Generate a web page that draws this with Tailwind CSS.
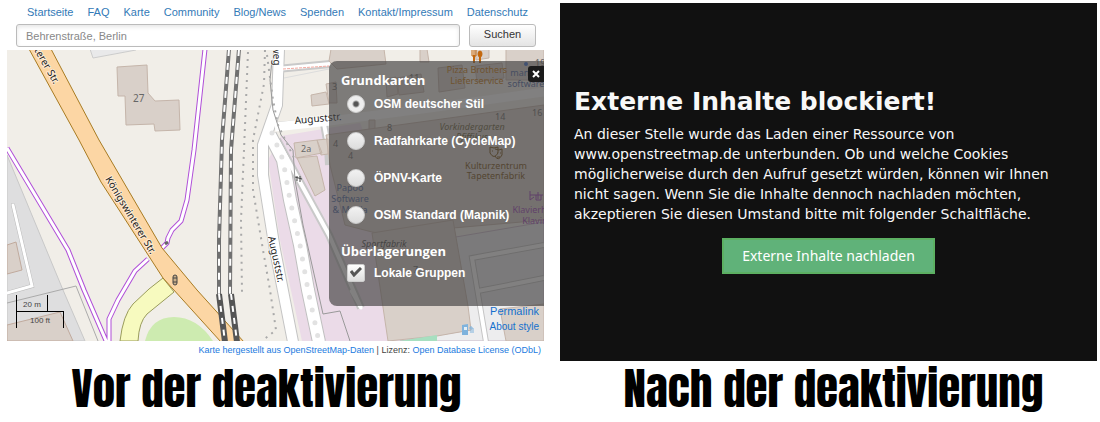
<!DOCTYPE html>
<html lang="de">
<head>
<meta charset="utf-8">
<title>Externe Inhalte: Vorher und Nachher</title>
<script src="https://cdn.jsdelivr.net/npm/@tailwindcss/browser@4"></script>
</head>
<body class="bg-white font-['Liberation_Sans',Arial,sans-serif]">
<main class="grid grid-cols-2 gap-4 pr-[3px] pl-[7px]">

<!-- Vorher: Karte -->
<figure class="flex flex-col">
  <nav class="flex h-6 items-center gap-[14px] pl-5 text-[11px] whitespace-nowrap text-[#337ab7]">
    <a href="#">Startseite</a><a href="#">FAQ</a><a href="#">Karte</a><a href="#">Community</a><a href="#">Blog/News</a><a href="#">Spenden</a><a href="#">Kontakt/Impressum</a><a href="#">Datenschutz</a>
  </nav>
  <form class="flex gap-[9px] pr-2 pb-[3px] pl-[9px]">
    <input type="text" aria-label="Adresse suchen" placeholder="Behrenstraße, Berlin" class="h-[23px] min-w-0 grow rounded-[3px] border border-[#bbb] px-[9px] text-[11px] shadow-inner shadow-black/10 placeholder:text-[#888]">
    <button type="button" class="h-[23px] w-[67px] rounded-[3px] border border-[#bbb] bg-linear-to-b from-white to-[#e4e4e4] pb-[3px] text-[11px] text-[#333]">Suchen</button>
  </form>
  <div class="relative">
    <svg viewBox="7 50 537 291" class="block w-full" font-family="Noto Sans, sans-serif" font-size="9" fill="none" role="img" aria-label="Karte">
      <rect x="7" y="50" width="537" height="291" fill="#f1eee8"/>
      <!-- Flächen -->
      <path d="M7 155L63 290L85 341H7Z" fill="#dededf" stroke="#c8c8c8"/>
      <path d="M7 245L16 242L22 270L7 274ZM7 325L60 312L73 341H7Z" fill="#d9d0c9" stroke="#c0aa9d"/>
      <path d="M13 205L32 286L7 293" stroke="#bbb" stroke-width="4" stroke-linecap="round"/>
      <path d="M13 205L32 286L7 293" stroke="#fff" stroke-width="3" stroke-linecap="round"/>
      <path d="M7 303L76 286L98 341" stroke="#aaa"/>
      <path d="M90 49L93 58L136 50V49Z" fill="#e9e9ea" stroke="#ccc"/>
      <path d="M117 67L147 65L148 93L155 101L179 100L180 130L155 131L154 124L126 125L125 96L118 96Z" fill="#d9d0c9" stroke="#c5b5aa"/>
      <path d="M145 341Q151 317 174 317Q197 317 213 341Z" fill="#cdebb0"/>
      <path d="M268 160L281 136L335 127L360 123L400 225L476 240L485 341H302L280 240Z" fill="#ebdbe8"/>
      <path d="M284 78L329 69M272 70L284 69" stroke="#ddd"/>
      <!-- Wege -->
      <g stroke-linejoin="round">
        <path d="M7 148L68 250L84 290L107 343M205 49L194 150L187 200L181 221L172 230L168 238L167 243L162 248M148 259L135 271L118 300L109 319V341" stroke="#b04ed8" stroke-width="5"/>
        <path d="M7 148L68 250L84 290L107 343M205 49L194 150L187 200L181 221L172 230L168 238L167 243L162 248M148 259L135 271L118 300L109 319V341" stroke="#fff" stroke-width="3"/>
        <path d="M165 244L168 242" stroke="#666" stroke-width="3"/>
      </g>
      <path d="M163 278L149 289L133 304Q123 315 120 341H138Q139 322 147 314L174 292Z" fill="#f7fabf" stroke="#9a9c5c"/>
      <path d="M29 49L79 140L101 182L163 278L221 342H244L197 290L162 248L99 140L51 49Z" fill="#fcd6a4" stroke="#a87b22"/>
      <!-- Gleise -->
      <path d="M229 49L222 140L219 240V294M239 49L231 150L230 294" stroke="#707070" stroke-width="4"/>
      <path d="M229 49L222 140L219 240V294M239 49L231 150L230 294" stroke="#fff" stroke-width="2" stroke-dasharray="7 7"/>
      <path d="M219 294L225 342M231 294L237 342" stroke="#555" stroke-width="6"/>
      <path d="M219 294L225 342M231 294L237 342" stroke="#fff" stroke-width="2" stroke-dasharray="6 6"/>
      <path d="M248 52L244 150L241 220L242 293M265 50L264 84L253 140L253 190L263 250L270 290L276 330L262 341" stroke="#a9a9a9" stroke-width="2" stroke-dasharray="2 5"/>
      <!-- Straßen -->
      <path d="M279 49L277 105L263 145V175L275 250L293 342" stroke="#c4c4c4" stroke-width="12"/>
      <path d="M277 126L330 121L430 108L544 92M277 69L330 64M324 124L328 146L329 165M277 140L329 235L361 308" stroke="#c9c9c9" stroke-width="8"/>
      <path d="M270 135L283 160L290 200L300 245L308 290L319 342" stroke="#c0c0c0" stroke-width="14"/>
      <path d="M279 49L277 105L263 145V175L275 250L293 342" stroke="#fff" stroke-width="10"/>
      <path d="M275 127L330 121L430 108L544 92" stroke="#fff" stroke-width="9"/>
      <path d="M277 69L330 64M324 124L328 146M277 140L329 235L361 308" stroke="#fff" stroke-width="4"/>
      <path d="M270 135L283 160L290 200L300 245L308 290L319 342" stroke="#fff" stroke-width="12"/>
      <path d="M272 133L283 160L290 200L300 245L308 290L319 342" stroke="#e2e2e2" stroke-width="5" stroke-linecap="round" stroke-dasharray="0 13"/>
      <path d="M283 69L329 66" stroke="#f3a9a0" stroke-dasharray="3 1"/>
      <path d="M272 60L270 80L273 110L281 135L293 150L295 180L303 225L323 314L340 311L350 341" stroke="#999"/>
      <path d="M267 55L273 100L278 125L295 160" stroke="#aaa" stroke-width="2" stroke-dasharray="2 5"/>
      <!-- Gebäude -->
      <g fill="#d9d0c9" stroke="#c5b5aa">
        <path d="M331 49L384 49L386 64L337 69L329 61ZM420 49H427L429 62H420ZM506 49H544V80H506ZM475 49L489 49V58L476 60Z"/>
        <path d="M311 95L326 92L329 104L312 106ZM326 84L336 82L337 103H329ZM386 79L396 77L398 94L387 97ZM397 78L421 74L424 92L399 95ZM438 68L462 65L465 88L439 92ZM475 66L502 63L504 78L477 82ZM369 120H375V130H369Z"/>
        <path d="M294 143L317 140L322 153L296 158ZM317 140L328 139V154L321 155ZM297 158L317 156L325 190L315 196ZM326 135L544 105V220L385 234L372 232L345 225L330 165Z"/>
      </g>
      <path d="M450 238L544 222V341H400L471 330Z" fill="#ededee" stroke="#c9b9c9"/>
      <path d="M372 233L453 220L468 306L471 330L437 336L388 341Z" fill="#d9d0c9" stroke="#c5b5aa"/>
      <path d="M399 341L437 335V341Z" fill="#a7dfc0"/>
      <path d="M500 309L544 304V341H506Z" fill="#d9d0c9" stroke="#c5b5aa"/>
      <path d="M544 245L472 258L486 342M478 291L544 278" stroke="#c5c5c5" stroke-width="6"/>
      <path d="M544 245L472 258L486 342M478 291L544 278" stroke="#fff" stroke-width="4"/>
      <path d="M351 291L361 308" stroke="#fff" stroke-width="3" stroke-linecap="round"/>
      <!-- Beschriftungen -->
      <g fill="#222" font-size="10" stroke="#fff" stroke-opacity=".5" stroke-width="2" paint-order="stroke">
        <text transform="translate(34 50) rotate(60)">terer Str.</text>
        <text transform="translate(105 179) rotate(59)">Königswinterer Str.</text>
        <text transform="translate(273 46) rotate(88)">weg</text>
        <text transform="translate(295 124) rotate(-5)">Auguststr.</text>
        <text transform="translate(268 237) rotate(78)">Auguststr.</text>
      </g>
      <g fill="#666">
        <text x="133" y="102" font-size="10">27</text><text x="301" y="152">2a</text>
        <text x="332" y="90">3</text><text x="409" y="81">11</text><text x="387" y="131">8</text><text x="333" y="147">4</text><text x="348" y="159">4</text><text x="495" y="120">14</text><text x="532" y="116">16</text><text x="535" y="66">19</text><text x="413" y="273">7</text>
      </g>
      <g text-anchor="middle">
        <g fill="#c77400"><text x="477" y="73">Pizza Brothers</text><text x="477" y="84">Lieferservice</text></g>
        <g fill="#4863a0"><text x="522" y="76">manz</text><text x="526" y="87">software</text><text x="350" y="191">Papoo</text><text x="350" y="202">Software</text><text x="350" y="213">&amp; Media</text></g>
        <g fill="#665c36" font-style="italic"><text x="472" y="130">Vorkindergarten</text><text x="472" y="140">Pfiffikus</text></g>
        <g fill="#734a08"><text x="496" y="169">Kulturzentrum</text><text x="496" y="179">Tapetenfabrik</text></g>
        <g fill="#993bb8"><text x="532" y="213">Klavierha</text><text x="537" y="224">Klavins</text></g>
        <text x="384" y="247" fill="#444" font-style="italic">Sportfabrik</text>
      </g>
      <!-- Symbole -->
      <g stroke="#c4670c"><path d="M472 50V56M474 50V56M476 50V56M472 56H476"/><path d="M474 55V63M480 57V63" stroke-width="2"/><ellipse cx="480" cy="54" rx="2" ry="3" fill="#c4670c"/></g>
      <circle cx="526" cy="64" r="2" fill="#3c6fd0"/>
      <g stroke="#734a08"><path d="M490 147Q494 149 498 147V153Q494 160 490 153ZM495 149Q499 151 502 149V155Q498 162 495 156"/><path d="M492 151H493M497 153H498M500 153H501M497 157H500"/></g>
      <path d="M530 191V200L534 197M530 195H543M536 195V200H541V195M538 192V199" stroke="#993bb8" stroke-width="1"/>
      <g stroke="#444" fill="#cbb08a"><rect x="173" y="275" width="4" height="10" rx="2"/><path d="M173 278H177M173 282H177"/></g>
      <path d="M295 177L302 179M297 176V181M300 176V182" stroke="#444"/>
      <g fill="#7fb3dd"><path d="M462 325L468 324V335H462Z"/><path d="M464 327H467V330H464Z" fill="#e5eef5"/><path d="M469 328H473V333M471 326V333" stroke="#7fb3dd" fill="none"/></g>
      <!-- Maßstab -->
      <path d="M16.500 295V328M47.500 295V312M16 311.500H64M63.500 311V328" stroke="#000"/>
      <g font-family="Liberation Sans, Arial, sans-serif" font-size="8" fill="#444" text-anchor="middle"><text x="32" y="307">20 m</text><text x="40" y="323">100 ft</text></g>
    </svg>

    <!-- Ebenenauswahl, über der Karte -->
    <div class="absolute top-[11px] right-0 flex h-[245px] w-[215px] flex-col rounded-l-lg bg-[rgb(70,68,68)]/68 pt-[11px] pl-3 text-[12px] font-bold text-white">
      <button type="button" aria-label="Schließen" class="absolute top-[5px] right-0 flex size-4 items-center justify-center rounded-l-[3px] bg-[#1b1b1b]"><svg viewBox="0 0 8 8" class="size-2" stroke="#fff" stroke-width="2"><path d="M1 1L7 7M7 1L1 7"/></svg></button>
      <fieldset>
        <legend class="h-4 font-['Open_Sans','Noto_Sans',sans-serif] text-[13px] leading-4">Grundkarten</legend>
        <div class="flex flex-col pt-[7px] pl-[6px]">
          <label class="flex h-[37px] items-start gap-[9px] leading-[18px]"><input type="radio" name="karte" checked class="size-[18px] appearance-none rounded-full border border-[#ccc] bg-[#eee] bg-[radial-gradient(circle,#555_2px,transparent_4px)]">OSM deutscher Stil</label>
          <label class="flex h-[37px] items-start gap-[9px] leading-[18px]"><input type="radio" name="karte" class="size-[18px] appearance-none rounded-full border border-[#ccc] bg-linear-to-b from-[#f2f2f2] to-[#ddd]">Radfahrkarte (CycleMap)</label>
          <label class="flex h-[37px] items-start gap-[9px] leading-[18px]"><input type="radio" name="karte" class="size-[18px] appearance-none rounded-full border border-[#ccc] bg-linear-to-b from-[#f2f2f2] to-[#ddd]">ÖPNV-Karte</label>
          <label class="flex h-[37px] items-start gap-[9px] leading-[18px]"><input type="radio" name="karte" class="size-[18px] appearance-none rounded-full border border-[#ccc] bg-linear-to-b from-[#f2f2f2] to-[#ddd]">OSM Standard (Mapnik)</label>
        </div>
      </fieldset>
      <fieldset>
        <legend class="h-4 font-['Open_Sans','Noto_Sans',sans-serif] text-[13px] leading-4">Überlagerungen</legend>
        <label class="relative flex gap-[9px] pt-[5px] pl-[6px] leading-[18px]"><input type="checkbox" checked class="size-[18px] appearance-none rounded-[2px] border border-[#ccc] bg-linear-to-b from-white to-[#ddd]"><svg viewBox="0 0 12 10" class="pointer-events-none absolute top-[8px] left-[9px] h-[10px] w-3" fill="none" stroke="#555" stroke-width="3"><path d="M1 4L4 8L11 1"/></svg>Lokale Gruppen</label>
      </fieldset>
    </div>
    <div class="absolute right-[5px] bottom-[6px] flex flex-col items-end text-[#1570cd]">
      <a href="#" class="text-[11px] leading-4">Permalink</a>
      <a href="#" class="text-[10px] leading-4">About style</a>
    </div>
  </div>
  <p class="h-5 pr-[3px] text-right text-[9px] leading-[18px] whitespace-nowrap text-[#444]"><a href="#" class="text-[#1b7be0]">Karte hergestellt aus OpenStreetMap-Daten</a> | Lizenz: <a href="#" class="text-[#1b7be0]">Open Database License (ODbL)</a></p>
  <figcaption class="pr-[18px] text-center font-['Anton','Liberation_Sans_Narrow','Liberation_Sans',sans-serif] text-[45px] leading-[54px] whitespace-nowrap text-black">Vor der deaktivierung</figcaption>
</figure>

<!-- Nachher: blockierter Inhalt -->
<figure class="flex flex-col pt-[3px]">
  <section class="flex grow flex-col justify-center bg-[#111] px-[14px] pb-1 font-['DejaVu_Sans',sans-serif] text-[14px] leading-5 text-[#f8f8f8]">
    <h1 class="mb-[6px] text-[25px] leading-8 font-bold">Externe Inhalte blockiert!</h1>
    <p class="mb-[14px]">An dieser Stelle wurde das Laden einer Ressource von www.openstreetmap.de unterbunden. Ob und welche Cookies möglicherweise durch den Aufruf gesetzt würden, können wir Ihnen nicht sagen. Wenn Sie die Inhalte dennoch nachladen möchten, akzeptieren Sie diesen Umstand bitte mit folgender Schaltfläche.</p>
    <button type="button" class="h-9 self-center border-2 border-[#5cb062] bg-[#60b279] px-[18px] font-['Noto_Sans',sans-serif] text-white">Externe Inhalte nachladen</button>
  </section>
  <figcaption class="pl-[10px] text-center font-['Anton','Liberation_Sans_Narrow','Liberation_Sans',sans-serif] text-[45px] leading-[54px] whitespace-nowrap text-black">Nach der deaktivierung</figcaption>
</figure>
</main>
</body>
</html>
